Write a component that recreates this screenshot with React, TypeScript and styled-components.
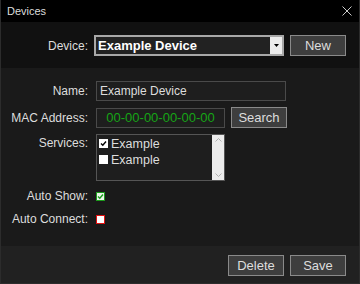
import * as React from "react";
import styled, { createGlobalStyle } from "styled-components";

const GlobalStyle = createGlobalStyle`
	html, body {
		margin: 0;
		padding: 0;
		background: #000;
	}
	body {
		font-family: "Liberation Sans", Arial, sans-serif;
	}
`;

const Window = styled.div`
	width: 360px;
	height: 284px;
	box-sizing: border-box;
	display: flex;
	flex-direction: column;
	background: #1a1a1a;
	border: 1px solid #2c2c2c;
	border-top: none;
	color: #ddd;
	font-size: 12px;
`;

const TitleBar = styled.div`
	height: 22px;
	flex: none;
	background: #000;
	display: flex;
	align-items: center;
	justify-content: space-between;
	padding: 0 6px 0 6px;
	font-size: 11px;
	color: #ddd;
`;

const CloseButton = styled.div`
	width: 12px;
	height: 12px;
	display: flex;
	align-items: center;
	justify-content: center;
`;

const Header = styled.div`
	height: 46px;
	flex: none;
	background: #111;
	display: grid;
	grid-template-columns: 87px 190px 56px;
	column-gap: 6px;
	align-items: center;
	padding-top: 1px;
	box-sizing: border-box;
`;

const Body = styled.div`
	flex: 1;
	display: grid;
	grid-template-columns: 87px auto;
	grid-auto-rows: min-content;
	column-gap: 8px;
	row-gap: 6px;
	padding-top: 13px;
`;

const Label = styled.div<{ $top?: boolean }>`
	text-align: right;
	color: #ddd;
	align-self: ${(p) => (p.$top ? "start" : "center")};
	padding-top: ${(p) => (p.$top ? "2px" : "0")};
	white-space: nowrap;
`;

const FieldRow = styled.div`
	display: flex;
	align-items: center;
	gap: 6px;
`;

const Select = styled.div`
	height: 21px;
	box-sizing: border-box;
	border: 2px solid #a8a8a8;
	background: #222;
	display: flex;
	align-items: stretch;
	justify-content: space-between;
	color: #fff;
	font-weight: bold;
	font-size: 13px;
`;

const SelectText = styled.span`
	display: flex;
	align-items: center;
	padding-left: 2px;
`;

const SelectArrow = styled.span`
	width: 12px;
	background: #ececec;
	display: flex;
	align-items: center;
	justify-content: center;
`;

const Button = styled.button`
	height: 21px;
	width: 56px;
	box-sizing: border-box;
	background: #3e3e3e;
	border: 1px solid #8a8a8a;
	color: #ddd;
	font-family: inherit;
	font-size: 13px;
	padding: 0;
`;

const TextInput = styled.div<{ $width: number; $color?: string }>`
	width: ${(p) => p.$width}px;
	height: 20px;
	box-sizing: border-box;
	border: 1px solid #4a4a4a;
	background: #1e1e1e;
	color: ${(p) => p.$color || "#ddd"};
	font-size: ${(p) => (p.$color ? "13px" : "12px")};
	display: flex;
	align-items: center;
	justify-content: ${(p) => (p.$color ? "center" : "flex-start")};
	padding-left: ${(p) => (p.$color ? "0" : "3px")};
`;

const ListBox = styled.div`
	width: 129px;
	height: 47px;
	box-sizing: border-box;
	border: 1px solid #555;
	background: #1e1e1e;
	display: flex;
`;

const ListItems = styled.div`
	flex: 1;
	display: flex;
	flex-direction: column;
	padding: 1px 0 0 2px;
	gap: 1px;
`;

const ListItem = styled.div`
	display: flex;
	align-items: center;
	gap: 3px;
	color: #ddd;
	height: 15px;
	font-size: 12.5px;
`;

const Scrollbar = styled.div`
	width: 12px;
	background: #ececec;
	display: flex;
	flex-direction: column;
	justify-content: space-between;
	align-items: center;
	padding: 3px 0;
	box-sizing: border-box;
`;

const Box = styled.span<{ $border: string; $fill: string }>`
	width: 9px;
	height: 9px;
	box-sizing: border-box;
	border: 1px solid ${(p) => p.$border};
	background: ${(p) => p.$fill};
	display: inline-flex;
	align-items: center;
	justify-content: center;
`;

const CheckRow = styled.div`
	height: 16px;
	box-sizing: content-box;
	padding-top: 1px;
	display: flex;
	align-items: center;
`;

const Footer = styled.div`
	height: 36px;
	flex: none;
	background: #212121;
	display: flex;
	justify-content: flex-end;
	align-items: center;
	gap: 6px;
	padding-right: 13px;
	padding-top: 1px;
`;

const Check = ({ color }: { color: string }) => (
	<svg width="7" height="7" viewBox="0 0 7 7">
		<path d="M1 3.5 L2.8 5.3 L6 1.5" stroke={color} strokeWidth="1.4" fill="none" />
	</svg>
);

const Chevron = ({ up }: { up?: boolean }) => (
	<svg width="7" height="4" viewBox="0 0 7 4">
		<path
			d={up ? "M0.5 3.5 L3.5 0.5 L6.5 3.5" : "M0.5 0.5 L3.5 3.5 L6.5 0.5"}
			stroke="#b0b0b0"
			fill="none"
		/>
	</svg>
);

export default function App() {
	return (
		<>
			<GlobalStyle />
			<Window>
				<TitleBar>
					<span>Devices</span>
					<CloseButton>
						<svg width="10" height="10" viewBox="0 0 10 10">
							<path d="M0.5 0.5 L9.5 9.5 M9.5 0.5 L0.5 9.5" stroke="#ccc" strokeWidth="1" />
						</svg>
					</CloseButton>
				</TitleBar>
				<Header>
					<Label>Device:</Label>
					<Select>
						<SelectText>Example Device</SelectText>
						<SelectArrow>
							<svg width="5" height="3" viewBox="0 0 5 3">
								<path d="M0 0 H5 L2.5 3 Z" fill="#000" />
							</svg>
						</SelectArrow>
					</Select>
					<Button>New</Button>
				</Header>
				<Body>
					<Label>Name:</Label>
					<TextInput $width={190}>Example Device</TextInput>
					<Label>MAC Address:</Label>
					<FieldRow>
						<TextInput $width={129} $color="#16a516">
							00-00-00-00-00-00
						</TextInput>
						<Button>Search</Button>
					</FieldRow>
					<Label $top>Services:</Label>
					<ListBox>
						<ListItems>
							<ListItem>
								<Box $border="#fff" $fill="#fff">
									<Check color="#000" />
								</Box>
								Example
							</ListItem>
							<ListItem>
								<Box $border="#fff" $fill="#fff" />
								Example
							</ListItem>
						</ListItems>
						<Scrollbar>
							<Chevron up />
							<Chevron />
						</Scrollbar>
					</ListBox>
					<Label>Auto Show:</Label>
					<CheckRow>
						<Box $border="#1c9a1c" $fill="#e8f5e8">
							<Check color="#1c9a1c" />
						</Box>
					</CheckRow>
					<Label>Auto Connect:</Label>
					<CheckRow>
						<Box $border="#e01010" $fill="#fff" />
					</CheckRow>
				</Body>
				<Footer>
					<Button>Delete</Button>
					<Button>Save</Button>
				</Footer>
			</Window>
		</>
	);
}
